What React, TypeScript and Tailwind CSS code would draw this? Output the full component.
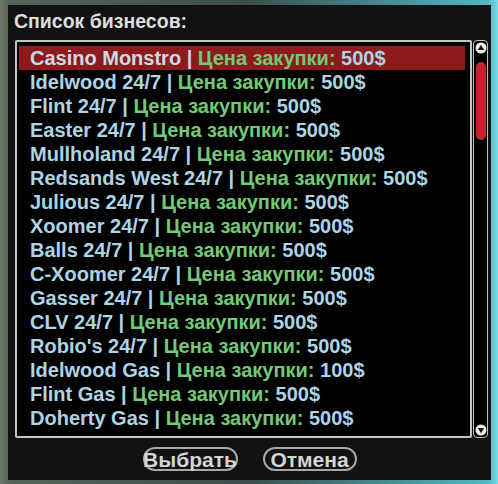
const businesses: { name: string; price: string }[] = [
  { name: 'Casino Monstro', price: '500$' },
  { name: 'Idelwood 24/7', price: '500$' },
  { name: 'Flint 24/7', price: '500$' },
  { name: 'Easter 24/7', price: '500$' },
  { name: 'Mullholand 24/7', price: '500$' },
  { name: 'Redsands West 24/7', price: '500$' },
  { name: 'Julious 24/7', price: '500$' },
  { name: 'Xoomer 24/7', price: '500$' },
  { name: 'Balls 24/7', price: '500$' },
  { name: 'C-Xoomer 24/7', price: '500$' },
  { name: 'Gasser 24/7', price: '500$' },
  { name: 'CLV 24/7', price: '500$' },
  { name: "Robio's 24/7", price: '500$' },
  { name: 'Idelwood Gas', price: '100$' },
  { name: 'Flint Gas', price: '500$' },
  { name: 'Doherty Gas', price: '500$' },
];

export default function App() {
  const selected = 0;

  return (
    <div
      className="w-[498px] h-[484px] overflow-hidden pt-[5px] pl-[8px] bg-[linear-gradient(90deg,#6a7466_0%,#55645a_2%,#3c4f4c_50%,#4fb9c4_98%,#74dce8_100%)]"
      style={{ fontFamily: '"Liberation Sans", Arial, sans-serif' }}
    >
      <div className="w-[483px] h-[475px] bg-[#121212] flex flex-col">
        <div className="h-[35px] pl-[6px] pt-[4px] text-[19.5px] leading-[24px] font-bold text-[#dedede]">
          Список бизнесов:
        </div>

        <div className="flex ml-[7px] h-[398px]">
          <div className="w-[457px] h-full border-2 border-[#c4c4c4] rounded-[2px] bg-black pt-[4px] pl-[2px] pr-[5px]">
            <ul>
              {businesses.map((b, i) => (
                <li
                  key={b.name}
                  className={
                    'h-[24px] pl-[11px] flex items-center whitespace-pre text-[20px] font-bold ' +
                    (i === selected ? 'bg-[#8e1b1c]' : '')
                  }
                >
                  <span className={i === selected ? 'text-[#c9dbe6]' : 'text-[#acd4e6]'}>
                    {b.name + ' | '}
                  </span>
                  <span className="text-[#72c977]">{'Цена закупки: '}</span>
                  <span className="text-[#acd4e6]">{b.price}</span>
                </li>
              ))}
            </ul>
          </div>

          <div className="w-[15px] h-full ml-[1px] border-[1.5px] border-[#bdbdbd] rounded-[4px] bg-black flex flex-col items-center">
            <svg width="12" height="12" viewBox="0 0 12 12" className="mt-[1px]">
              <circle cx="6" cy="6" r="5.5" fill="#f0f0f0" />
              <path d="M6 2.8 L9.2 8 L2.8 8 Z" fill="#111" />
            </svg>
            <div className="mt-[8px] w-[10px] h-[78px] rounded-full bg-[#c3252b]" />
            <div className="flex-1" />
            <svg width="12" height="12" viewBox="0 0 12 12" className="mb-[1px]">
              <circle cx="6" cy="6" r="5.5" fill="#f0f0f0" />
              <path d="M2.8 4 L9.2 4 L6 9.2 Z" fill="#111" />
            </svg>
          </div>
        </div>

        <div className="flex justify-center gap-[25px] mt-[9px]">
          <button className="w-[95px] h-[24px] rounded-full border-2 border-[#a8a8a8] text-[#d4d4d4] text-[21px] leading-none font-bold flex items-center justify-center whitespace-nowrap">
            Выбрать
          </button>
          <button className="w-[94px] h-[24px] rounded-full border-2 border-[#a8a8a8] text-[#d4d4d4] text-[21px] leading-none font-bold flex items-center justify-center whitespace-nowrap">
            Отмена
          </button>
        </div>
      </div>
    </div>
  );
}
